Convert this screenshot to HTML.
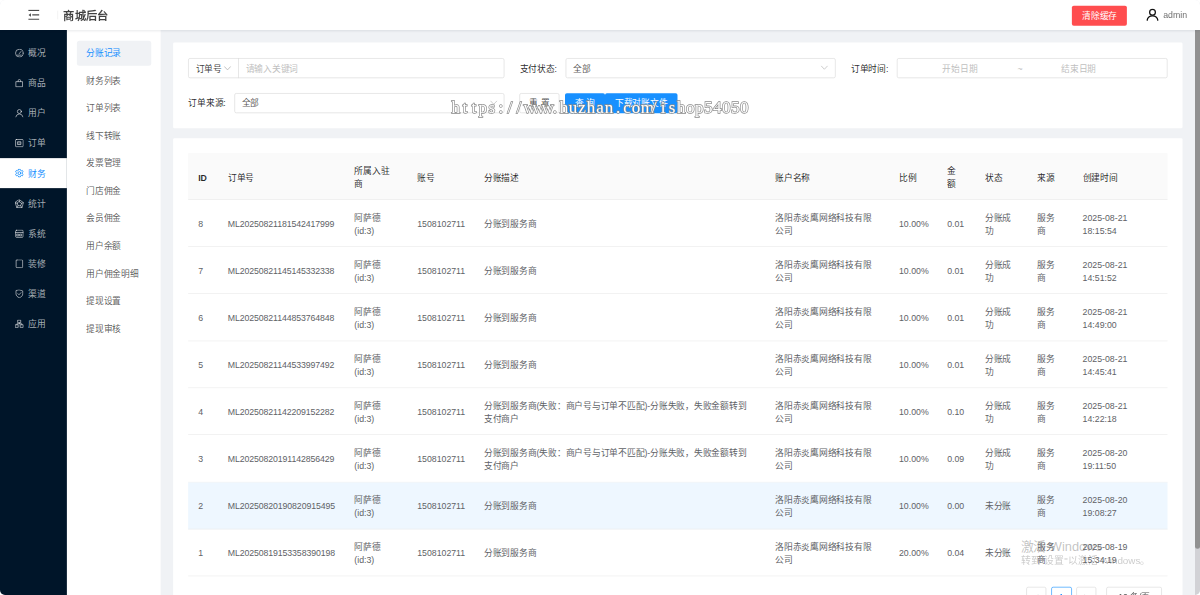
<!DOCTYPE html>
<html lang="zh-CN"><head><meta charset="utf-8"><title>商城后台</title><style>
*{box-sizing:border-box;margin:0;padding:0}
html,body{width:1200px;height:595px;overflow:hidden;background:#fff}
body{font-family:"Liberation Sans",sans-serif;font-size:14px;color:rgba(0,0,0,.85)}
#root{position:absolute;left:0;top:0;width:1920px;height:952px;transform:scale(.625);transform-origin:0 0;overflow:hidden;background:#f0f2f5;border-radius:8px}
.abs{position:absolute}
.nw{white-space:nowrap}
#hdr{position:absolute;left:0;top:0;width:1920px;height:48px;background:#fff;box-shadow:0 1px 4px rgba(0,21,41,.09);z-index:5}
#sb1{position:absolute;left:0;top:48px;width:107.2px;height:904px;background:#001529;z-index:3}
#sb2{position:absolute;left:107.2px;top:48px;width:149.6px;height:904px;background:#fff;z-index:2}
.m1{position:absolute;left:0;width:107.2px;height:48px;color:rgba(255,255,255,.65);line-height:48px;white-space:nowrap}
.m1 svg{position:absolute;left:24px;top:17.4px;width:14px;height:14px}
.m1>span{position:absolute;left:45px;top:.6px}
.m1.on{background:#fff;color:#1890ff}
.m2{position:absolute;left:15.8px;width:119.4px;height:40px;line-height:40.6px;padding-left:15px;color:rgba(0,0,0,.65);border-radius:4px;white-space:nowrap}
.m2.on{background:#f0f2f5;color:#1890ff}
.card{position:absolute;left:276.8px;width:1615.2px;background:#fff;border-radius:2px}
.inp{position:absolute;height:32px;border:1px solid #d9d9d9;border-radius:3px;background:#fff;line-height:30px;white-space:nowrap}
.lbl{position:absolute;height:32px;line-height:32px;white-space:nowrap;color:rgba(0,0,0,.85)}
.ph{color:#bfbfbf}
.btn{position:absolute;height:32px;line-height:30px;text-align:center;border-radius:3px;white-space:nowrap}
.th,.td{position:absolute;white-space:nowrap;line-height:21px}
.th{color:rgba(0,0,0,.85);font-weight:500}
.td{color:#606266}
.row{position:absolute;left:24px;width:1567px;height:75.17px;border-bottom:1px solid #ebebeb}
#wm{position:absolute;left:451.3px;top:97.2px;white-space:nowrap;font-family:"Liberation Serif",serif;font-size:17px;line-height:21px;color:#fff;-webkit-text-stroke:1.4px #8a8a8a;paint-order:stroke fill;z-index:20}
#wm b{display:inline-block;width:9.03px;text-align:center;font-weight:400}
.j{display:inline-block;white-space:nowrap;text-align:justify;text-align-last:justify}
.pg{position:absolute;top:938.7px;height:32px;border:1px solid #d9d9d9;border-radius:3px;background:#fff}
</style></head><body><div id="root">
<div id="hdr">
<svg class="abs" style="left:44.8px;top:15px;width:18.4px;height:18px" viewBox="0 0 18.4 18"><path d="M0.3 1.7 H18.1 M6.6 8.9 H18.1 M0.3 15.8 H18.1" stroke="#4a4a4a" stroke-width="1.9" fill="none"/><path d="M4.5 6 V11.8 L0.6 8.9 Z" fill="#4a4a4a"/></svg>
<div class="abs" style="left:92px;top:17px;width:1px;height:14px;background:#ececec"></div>
<div class="abs nw" style="left:101.6px;top:0;line-height:53.6px;font-size:18px;font-weight:600;color:rgba(0,0,0,.74)"><span class="j" style="width:72.00px">商城后台</span></div>
<div class="btn" style="left:1715.2px;top:9px;width:88.2px;background:#ff4d4f;color:#fff;line-height:32px"><span class="j" style="width:56.00px">清除缓存</span></div>
<svg class="abs" style="left:1833.6px;top:13px;width:20px;height:20.5px" viewBox="0 0 20 20.5" fill="none" stroke="#111" stroke-width="2" stroke-linecap="round"><circle cx="10" cy="6.4" r="4.6"/><path d="M1.3 19.4 A8.9 8.9 0 0 1 18.7 19.4"/></svg>
<div class="abs nw" style="left:1861.2px;top:0;line-height:48px;color:rgba(0,0,0,.6)">admin</div>
</div>
<div id="sb1">
<div class="m1" style="top:12.5px"><svg viewBox="0 0 14 14" fill="none" stroke="rgba(255,255,255,.65)" stroke-width="1.35" style="color:rgba(255,255,255,.65)" stroke-linejoin="round" stroke-linecap="round"><circle cx="7" cy="7" r="6.2" /><path d="M6.8 7.8 L9.6 4.4 M4 10.2 H10" /></svg><span><span class="j" style="width:28.00px">概况</span></span></div>
<div class="m1" style="top:60.63px"><svg viewBox="0 0 14 14" fill="none" stroke="rgba(255,255,255,.65)" stroke-width="1.35" style="color:rgba(255,255,255,.65)" stroke-linejoin="round" stroke-linecap="round"><path d="M2 4.6 H12 V12.8 H2 Z M5 4.4 V3.2 A2 2 0 0 1 9 3.2 V4.4" /></svg><span><span class="j" style="width:28.00px">商品</span></span></div>
<div class="m1" style="top:108.76px"><svg viewBox="0 0 14 14" fill="none" stroke="rgba(255,255,255,.65)" stroke-width="1.35" style="color:rgba(255,255,255,.65)" stroke-linejoin="round" stroke-linecap="round"><circle cx="7" cy="4.4" r="3.2" /><path d="M1.2 13.2 A5.9 5.9 0 0 1 12.8 13.2" /></svg><span><span class="j" style="width:28.00px">用户</span></span></div>
<div class="m1" style="top:156.89000000000001px"><svg viewBox="0 0 14 14" fill="none" stroke="rgba(255,255,255,.65)" stroke-width="1.35" style="color:rgba(255,255,255,.65)" stroke-linejoin="round" stroke-linecap="round"><rect x="0.9" y="1.2" width="12.2" height="11.6" rx="1.2" /><rect x="4.6" y="4.8" width="4.8" height="4.4" fill="currentColor" fill-opacity=".35"/></svg><span><span class="j" style="width:28.00px">订单</span></span></div>
<div class="m1 on" style="top:205.02px"><svg viewBox="0 0 14 14" fill="none" stroke="#1890ff" stroke-width="1.35" style="color:#1890ff" stroke-linejoin="round" stroke-linecap="round"><circle cx="7" cy="7" r="2.3" /><path d="M5.67 0.74 L8.33 0.74 L8.66 2.39 L10.16 3.26 L11.76 2.72 L13.09 5.02 L11.82 6.13 L11.82 7.87 L13.09 8.98 L11.76 11.28 L10.16 10.74 L8.66 11.61 L8.33 13.26 L5.67 13.26 L5.34 11.61 L3.84 10.74 L2.24 11.28 L0.91 8.98 L2.18 7.87 L2.18 6.13 L0.91 5.02 L2.24 2.72 L3.84 3.26 L5.34 2.39 Z" /></svg><span><span class="j" style="width:28.00px">财务</span></span></div>
<div class="m1" style="top:253.15px"><svg viewBox="0 0 14 14" fill="none" stroke="rgba(255,255,255,.65)" stroke-width="1.35" style="color:rgba(255,255,255,.65)" stroke-linejoin="round" stroke-linecap="round"><path d="M7 0.6 L13.6 5.3 L11.1 13.2 H2.9 L0.4 5.3 Z M7 3.8 L10.4 6.3 L9.1 10.2 H4.9 L3.6 6.3 Z M7 0.6 V3.8 M13.6 5.3 L10.4 6.3 M11.1 13.2 L9.1 10.2 M2.9 13.2 L4.9 10.2 M0.4 5.3 L3.6 6.3" /></svg><span><span class="j" style="width:28.00px">统计</span></span></div>
<div class="m1" style="top:301.28000000000003px"><svg viewBox="0 0 14 14" fill="none" stroke="rgba(255,255,255,.65)" stroke-width="1.35" style="color:rgba(255,255,255,.65)" stroke-linejoin="round" stroke-linecap="round"><rect x="1" y="1.2" width="12" height="11.6" rx="1.6" /><path d="M1 5 H13 M3.4 7.6 H6 V10.4 H3.4 Z M8 7.6 H10.6 V10.4 H8 Z" /></svg><span><span class="j" style="width:28.00px">系统</span></span></div>
<div class="m1" style="top:349.41px"><svg viewBox="0 0 14 14" fill="none" stroke="rgba(255,255,255,.65)" stroke-width="1.35" style="color:rgba(255,255,255,.65)" stroke-linejoin="round" stroke-linecap="round"><rect x="1.8" y="0.7" width="10.4" height="12.6" rx="1.4" /></svg><span><span class="j" style="width:28.00px">装修</span></span></div>
<div class="m1" style="top:397.54px"><svg viewBox="0 0 14 14" fill="none" stroke="rgba(255,255,255,.65)" stroke-width="1.35" style="color:rgba(255,255,255,.65)" stroke-linejoin="round" stroke-linecap="round"><path d="M7 0.8 L12.4 2.5 V7 C12.4 10.2 10.2 12.2 7 13.4 C3.8 12.2 1.6 10.2 1.6 7 V2.5 Z M4.6 6.8 L6.4 8.6 L9.6 5.2" /></svg><span><span class="j" style="width:28.00px">渠道</span></span></div>
<div class="m1" style="top:445.67px"><svg viewBox="0 0 14 14" fill="none" stroke="rgba(255,255,255,.65)" stroke-width="1.35" style="color:rgba(255,255,255,.65)" stroke-linejoin="round" stroke-linecap="round"><rect x="4.9" y="1.2" width="4.2" height="4.2" /><rect x="0.9" y="8.6" width="4.2" height="4.2" /><rect x="8.9" y="8.6" width="4.2" height="4.2" /><path d="M7 5.4 V7 M3 8.6 V7 H11 V8.6" /></svg><span><span class="j" style="width:28.00px">应用</span></span></div>
</div>
<div id="sb2">
<div class="m2 on" style="top:16.5px"><span class="j" style="width:56.00px">分账记录</span></div>
<div class="m2" style="top:60.6px"><span class="j" style="width:56.00px">财务列表</span></div>
<div class="m2" style="top:104.8px"><span class="j" style="width:56.00px">订单列表</span></div>
<div class="m2" style="top:148.9px"><span class="j" style="width:56.00px">线下转账</span></div>
<div class="m2" style="top:193.1px"><span class="j" style="width:56.00px">发票管理</span></div>
<div class="m2" style="top:237.2px"><span class="j" style="width:56.00px">门店佣金</span></div>
<div class="m2" style="top:281.4px"><span class="j" style="width:56.00px">会员佣金</span></div>
<div class="m2" style="top:325.6px"><span class="j" style="width:56.00px">用户余额</span></div>
<div class="m2" style="top:369.7px"><span class="j" style="width:84.00px">用户佣金明细</span></div>
<div class="m2" style="top:413.8px"><span class="j" style="width:56.00px">提现设置</span></div>
<div class="m2" style="top:458.0px"><span class="j" style="width:56.00px">提现审核</span></div>
</div>
<div class="card" style="top:68.3px;height:136.4px">
<div class="inp" style="left:24.4px;top:24.8px;width:506px"></div>
<div class="abs" style="left:104.5px;top:24.8px;width:1px;height:32px;background:#d9d9d9"></div>
<div class="lbl" style="left:36.4px;top:25.5px;color:rgba(0,0,0,.78)"><span class="j" style="width:42.00px">订单号</span></div>
<svg class="abs" style="left:81.0px;top:34.4px;width:12px;height:12px" viewBox="0 0 12 12" fill="none" stroke="#b0b0b0" stroke-width="1.25"><path d="M0.8 3.3 L6 8.8 L11.2 3.3"/></svg>
<div class="lbl ph" style="left:116.2px;top:25.5px"><span class="j" style="width:84.00px">请输入关键词</span></div>
<div class="lbl" style="left:554.6px;top:25.5px"><span class="j" style="width:59.89px">支付状态:</span></div>
<div class="inp" style="left:628.0px;top:24.8px;width:431.8px"></div>
<div class="lbl" style="left:640.0px;top:25.5px;color:rgba(0,0,0,.7)"><span class="j" style="width:28.00px">全部</span></div>
<svg class="abs" style="left:1036.6px;top:34.1px;width:12px;height:12px" viewBox="0 0 12 12" fill="none" stroke="#bfbfbf" stroke-width="1.25"><path d="M0.8 3.3 L6 8.8 L11.2 3.3"/></svg>
<div class="lbl" style="left:1084.8px;top:25.5px"><span class="j" style="width:59.89px">订单时间:</span></div>
<div class="inp" style="left:1157.8px;top:24.8px;width:433.4px"></div>
<div class="lbl ph" style="left:1231.2px;top:25.5px"><span class="j" style="width:56.00px">开始日期</span></div>
<div class="lbl ph" style="left:1351.2px;top:25.5px">~</div>
<div class="lbl ph" style="left:1421.2px;top:25.5px"><span class="j" style="width:56.00px">结束日期</span></div>
<div class="lbl" style="left:24.5px;top:81.1px"><span class="j" style="width:59.89px">订单来源:</span></div>
<div class="inp" style="left:97.9px;top:80.7px;width:432.4px"></div>
<div class="lbl" style="left:109.9px;top:81.1px;color:rgba(0,0,0,.7)"><span class="j" style="width:28.00px">全部</span></div>
<svg class="abs" style="left:507.0px;top:90.0px;width:12px;height:12px" viewBox="0 0 12 12" fill="none" stroke="#bfbfbf" stroke-width="1.25"><path d="M0.8 3.3 L6 8.8 L11.2 3.3"/></svg>
<div class="btn" style="left:554.2px;top:80.7px;width:64.2px;border:1px solid #d9d9d9;background:#fff;color:rgba(0,0,0,.7)"><span class="j" style="width:31.89px">重 置</span></div>
<div class="btn" style="left:626.9px;top:80.7px;width:64px;background:#1890ff;color:#fff;line-height:32px"><span class="j" style="width:31.89px">查 询</span></div>
<div class="btn" style="left:690.9px;top:80.7px;width:116.6px;background:#1890ff;color:#fff;line-height:32px"><span class="j" style="width:84.00px">下载对账文件</span></div>
</div>
<div class="card" style="top:220.8px;height:760px">
<div class="abs" style="left:24.3px;top:23.8px;width:1567px;height:75.3px;background:#fafafa;border-bottom:1px solid #ebebeb"></div>
<div class="th" style="left:40.3px;top:53.0px;font-weight:700">ID</div>
<div class="th" style="left:87.7px;top:53.0px"><span class="j" style="width:42.00px">订单号</span></div>
<div class="th" style="left:290.1px;top:41.9px"><span class="j" style="width:56.00px">所属入驻</span><br>商</div>
<div class="th" style="left:390.7px;top:53.0px"><span class="j" style="width:28.00px">账号</span></div>
<div class="th" style="left:497.6px;top:53.0px"><span class="j" style="width:56.00px">分账描述</span></div>
<div class="th" style="left:963.5px;top:53.0px"><span class="j" style="width:56.00px">账户名称</span></div>
<div class="th" style="left:1161.6px;top:53.0px"><span class="j" style="width:28.00px">比例</span></div>
<div class="th" style="left:1238.7px;top:41.9px">金<br>额</div>
<div class="th" style="left:1299.2px;top:53.0px"><span class="j" style="width:28.00px">状态</span></div>
<div class="th" style="left:1382.7px;top:53.0px"><span class="j" style="width:28.00px">来源</span></div>
<div class="th" style="left:1455.4px;top:53.0px"><span class="j" style="width:56.00px">创建时间</span></div>
<div class="abs" style="left:24.3px;top:99.10px;width:1567px;height:75.3px;border-bottom:1px solid #ebebeb"></div>
<div class="td" style="left:40.3px;top:127.1px">8</div>
<div class="td" style="left:87.7px;top:127.1px;letter-spacing:-.17px">ML20250821181542417999</div>
<div class="td" style="left:290.1px;top:117.3px"><span class="j" style="width:42.00px">阿萨德</span><br>(id:3)</div>
<div class="td" style="left:390.7px;top:127.1px">1508102711</div>
<div class="td" style="left:497.6px;top:127.1px"><span class="j" style="width:84.00px">分账到服务商</span></div>
<div class="td" style="left:963.5px;top:117.3px"><span class="j" style="width:154.00px">洛阳赤炎鹰网络科技有限</span><br><span class="j" style="width:28.00px">公司</span></div>
<div class="td" style="left:1161.6px;top:127.1px">10.00%</div>
<div class="td" style="left:1238.7px;top:127.1px">0.01</div>
<div class="td" style="left:1299.2px;top:117.3px"><span class="j" style="width:42.00px">分账成</span><br>功</div>
<div class="td" style="left:1382.7px;top:117.3px"><span class="j" style="width:28.00px">服务</span><br>商</div>
<div class="td" style="left:1455.4px;top:117.3px">2025-08-21<br>18:15:54</div>
<div class="abs" style="left:24.3px;top:174.40px;width:1567px;height:75.3px;border-bottom:1px solid #ebebeb"></div>
<div class="td" style="left:40.3px;top:202.4px">7</div>
<div class="td" style="left:87.7px;top:202.4px;letter-spacing:-.17px">ML20250821145145332338</div>
<div class="td" style="left:290.1px;top:192.6px"><span class="j" style="width:42.00px">阿萨德</span><br>(id:3)</div>
<div class="td" style="left:390.7px;top:202.4px">1508102711</div>
<div class="td" style="left:497.6px;top:202.4px"><span class="j" style="width:84.00px">分账到服务商</span></div>
<div class="td" style="left:963.5px;top:192.6px"><span class="j" style="width:154.00px">洛阳赤炎鹰网络科技有限</span><br><span class="j" style="width:28.00px">公司</span></div>
<div class="td" style="left:1161.6px;top:202.4px">10.00%</div>
<div class="td" style="left:1238.7px;top:202.4px">0.01</div>
<div class="td" style="left:1299.2px;top:192.6px"><span class="j" style="width:42.00px">分账成</span><br>功</div>
<div class="td" style="left:1382.7px;top:192.6px"><span class="j" style="width:28.00px">服务</span><br>商</div>
<div class="td" style="left:1455.4px;top:192.6px">2025-08-21<br>14:51:52</div>
<div class="abs" style="left:24.3px;top:249.70px;width:1567px;height:75.3px;border-bottom:1px solid #ebebeb"></div>
<div class="td" style="left:40.3px;top:277.7px">6</div>
<div class="td" style="left:87.7px;top:277.7px;letter-spacing:-.17px">ML20250821144853764848</div>
<div class="td" style="left:290.1px;top:267.9px"><span class="j" style="width:42.00px">阿萨德</span><br>(id:3)</div>
<div class="td" style="left:390.7px;top:277.7px">1508102711</div>
<div class="td" style="left:497.6px;top:277.7px"><span class="j" style="width:84.00px">分账到服务商</span></div>
<div class="td" style="left:963.5px;top:267.9px"><span class="j" style="width:154.00px">洛阳赤炎鹰网络科技有限</span><br><span class="j" style="width:28.00px">公司</span></div>
<div class="td" style="left:1161.6px;top:277.7px">10.00%</div>
<div class="td" style="left:1238.7px;top:277.7px">0.01</div>
<div class="td" style="left:1299.2px;top:267.9px"><span class="j" style="width:42.00px">分账成</span><br>功</div>
<div class="td" style="left:1382.7px;top:267.9px"><span class="j" style="width:28.00px">服务</span><br>商</div>
<div class="td" style="left:1455.4px;top:267.9px">2025-08-21<br>14:49:00</div>
<div class="abs" style="left:24.3px;top:325.00px;width:1567px;height:75.3px;border-bottom:1px solid #ebebeb"></div>
<div class="td" style="left:40.3px;top:353.0px">5</div>
<div class="td" style="left:87.7px;top:353.0px;letter-spacing:-.17px">ML20250821144533997492</div>
<div class="td" style="left:290.1px;top:343.2px"><span class="j" style="width:42.00px">阿萨德</span><br>(id:3)</div>
<div class="td" style="left:390.7px;top:353.0px">1508102711</div>
<div class="td" style="left:497.6px;top:353.0px"><span class="j" style="width:84.00px">分账到服务商</span></div>
<div class="td" style="left:963.5px;top:343.2px"><span class="j" style="width:154.00px">洛阳赤炎鹰网络科技有限</span><br><span class="j" style="width:28.00px">公司</span></div>
<div class="td" style="left:1161.6px;top:353.0px">10.00%</div>
<div class="td" style="left:1238.7px;top:353.0px">0.01</div>
<div class="td" style="left:1299.2px;top:343.2px"><span class="j" style="width:42.00px">分账成</span><br>功</div>
<div class="td" style="left:1382.7px;top:343.2px"><span class="j" style="width:28.00px">服务</span><br>商</div>
<div class="td" style="left:1455.4px;top:343.2px">2025-08-21<br>14:45:41</div>
<div class="abs" style="left:24.3px;top:400.30px;width:1567px;height:75.3px;border-bottom:1px solid #ebebeb"></div>
<div class="td" style="left:40.3px;top:428.3px">4</div>
<div class="td" style="left:87.7px;top:428.3px;letter-spacing:-.17px">ML20250821142209152282</div>
<div class="td" style="left:290.1px;top:418.5px"><span class="j" style="width:42.00px">阿萨德</span><br>(id:3)</div>
<div class="td" style="left:390.7px;top:428.3px">1508102711</div>
<div class="td" style="left:497.6px;top:418.5px"><span class="j" style="width:419.99px">分账到服务商(失败：商户号与订单不匹配)-分账失败，失败金额转到</span><br><span class="j" style="width:56.00px">支付商户</span></div>
<div class="td" style="left:963.5px;top:418.5px"><span class="j" style="width:154.00px">洛阳赤炎鹰网络科技有限</span><br><span class="j" style="width:28.00px">公司</span></div>
<div class="td" style="left:1161.6px;top:428.3px">10.00%</div>
<div class="td" style="left:1238.7px;top:428.3px">0.10</div>
<div class="td" style="left:1299.2px;top:418.5px"><span class="j" style="width:42.00px">分账成</span><br>功</div>
<div class="td" style="left:1382.7px;top:418.5px"><span class="j" style="width:28.00px">服务</span><br>商</div>
<div class="td" style="left:1455.4px;top:418.5px">2025-08-21<br>14:22:18</div>
<div class="abs" style="left:24.3px;top:475.60px;width:1567px;height:75.3px;border-bottom:1px solid #ebebeb"></div>
<div class="td" style="left:40.3px;top:503.6px">3</div>
<div class="td" style="left:87.7px;top:503.6px;letter-spacing:-.17px">ML20250820191142856429</div>
<div class="td" style="left:290.1px;top:493.8px"><span class="j" style="width:42.00px">阿萨德</span><br>(id:3)</div>
<div class="td" style="left:390.7px;top:503.6px">1508102711</div>
<div class="td" style="left:497.6px;top:493.8px"><span class="j" style="width:419.99px">分账到服务商(失败：商户号与订单不匹配)-分账失败，失败金额转到</span><br><span class="j" style="width:56.00px">支付商户</span></div>
<div class="td" style="left:963.5px;top:493.8px"><span class="j" style="width:154.00px">洛阳赤炎鹰网络科技有限</span><br><span class="j" style="width:28.00px">公司</span></div>
<div class="td" style="left:1161.6px;top:503.6px">10.00%</div>
<div class="td" style="left:1238.7px;top:503.6px">0.09</div>
<div class="td" style="left:1299.2px;top:493.8px"><span class="j" style="width:42.00px">分账成</span><br>功</div>
<div class="td" style="left:1382.7px;top:493.8px"><span class="j" style="width:28.00px">服务</span><br>商</div>
<div class="td" style="left:1455.4px;top:493.8px">2025-08-20<br>19:11:50</div>
<div class="abs" style="left:24.3px;top:550.90px;width:1567px;height:75.3px;border-bottom:1px solid #ebebeb;background:#eef7ff"></div>
<div class="td" style="left:40.3px;top:578.9px">2</div>
<div class="td" style="left:87.7px;top:578.9px;letter-spacing:-.17px">ML20250820190820915495</div>
<div class="td" style="left:290.1px;top:569.1px"><span class="j" style="width:42.00px">阿萨德</span><br>(id:3)</div>
<div class="td" style="left:390.7px;top:578.9px">1508102711</div>
<div class="td" style="left:497.6px;top:578.9px"><span class="j" style="width:84.00px">分账到服务商</span></div>
<div class="td" style="left:963.5px;top:569.1px"><span class="j" style="width:154.00px">洛阳赤炎鹰网络科技有限</span><br><span class="j" style="width:28.00px">公司</span></div>
<div class="td" style="left:1161.6px;top:578.9px">10.00%</div>
<div class="td" style="left:1238.7px;top:578.9px">0.00</div>
<div class="td" style="left:1299.2px;top:578.9px"><span class="j" style="width:42.00px">未分账</span></div>
<div class="td" style="left:1382.7px;top:569.1px"><span class="j" style="width:28.00px">服务</span><br>商</div>
<div class="td" style="left:1455.4px;top:569.1px">2025-08-20<br>19:08:27</div>
<div class="abs" style="left:24.3px;top:626.20px;width:1567px;height:75.3px;border-bottom:1px solid #ebebeb"></div>
<div class="td" style="left:40.3px;top:654.2px">1</div>
<div class="td" style="left:87.7px;top:654.2px;letter-spacing:-.17px">ML20250819153358390198</div>
<div class="td" style="left:290.1px;top:644.4px"><span class="j" style="width:42.00px">阿萨德</span><br>(id:3)</div>
<div class="td" style="left:390.7px;top:654.2px">1508102711</div>
<div class="td" style="left:497.6px;top:654.2px"><span class="j" style="width:84.00px">分账到服务商</span></div>
<div class="td" style="left:963.5px;top:644.4px"><span class="j" style="width:154.00px">洛阳赤炎鹰网络科技有限</span><br><span class="j" style="width:28.00px">公司</span></div>
<div class="td" style="left:1161.6px;top:654.2px">20.00%</div>
<div class="td" style="left:1238.7px;top:654.2px">0.04</div>
<div class="td" style="left:1299.2px;top:654.2px"><span class="j" style="width:42.00px">未分账</span></div>
<div class="td" style="left:1382.7px;top:644.4px"><span class="j" style="width:28.00px">服务</span><br>商</div>
<div class="td" style="left:1455.4px;top:644.4px">2025-08-19<br>15:34:19</div>
<div class="abs" style="left:1365.4px;top:717.9px;width:32px;height:32px;border:1px solid #d9d9d9;border-radius:3px;background:#fff;text-align:center;line-height:30px;white-space:nowrap"><span style="color:#ccc">&lt;</span></div>
<div class="abs" style="left:1405.2px;top:717.9px;width:32.6px;height:32px;border:1px solid #1890ff;border-radius:3px;background:#fff;text-align:center;line-height:30px;white-space:nowrap"><span style="color:#1890ff">1</span></div>
<div class="abs" style="left:1445.4px;top:717.9px;width:32px;height:32px;border:1px solid #d9d9d9;border-radius:3px;background:#fff;text-align:center;line-height:30px;white-space:nowrap"><span style="color:#ccc">&gt;</span></div>
<div class="abs" style="left:1493.4px;top:717.9px;width:89px;height:32px;border:1px solid #d9d9d9;border-radius:3px;background:#fff;text-align:center;line-height:30px;white-space:nowrap"><span style="color:rgba(0,0,0,.7)"><span class="j" style="width:51.35px">10 条/页</span></span></div>
</div>
<div class="abs nw" style="left:1633px;top:859px;font-size:20.5px;line-height:32px;color:rgba(110,110,110,.42);z-index:9"><span class="j" style="width:129.86px">激活 Windows</span></div>
<div class="abs nw" style="left:1633px;top:885px;font-size:15.8px;line-height:24px;color:rgba(110,110,110,.36);z-index:9"><span class="j" style="width:206.10px">转到"设置"以激活 Windows。</span></div>
<div class="abs" style="left:1912px;top:48px;width:8px;height:904px;background:#d2d2d6;z-index:4"></div>
<div class="abs" style="left:1912px;top:48px;width:8px;height:829.5px;background:#919191;border-radius:0 0 4px 4px;z-index:4"></div>
</div><div id="wm"><b>h</b><b>t</b><b>t</b><b>p</b><b>s</b><b>:</b><b>/</b><b>/</b><b>w</b><b>w</b><b>w</b><b>.</b><b>h</b><b>u</b><b>z</b><b>h</b><b>a</b><b>n</b><b>.</b><b>c</b><b>o</b><b>m</b><b>/</b><b>i</b><b>s</b><b>h</b><b>o</b><b>p</b><b>5</b><b>4</b><b>0</b><b>5</b><b>0</b></div></body></html>
